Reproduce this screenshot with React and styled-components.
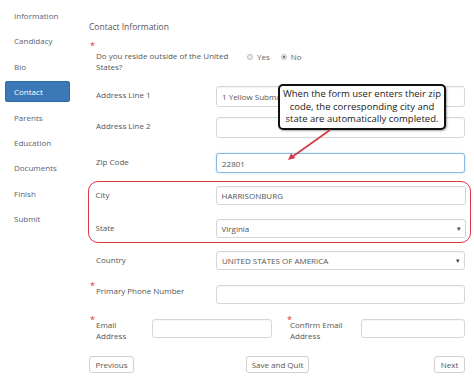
import React from "react";
import styled, { createGlobalStyle } from "styled-components";

const Global = createGlobalStyle`
  html, body { margin: 0; padding: 0; background: #fff; }
  body { font-family: "Open Sans", "Noto Sans", Arial, sans-serif; color: #555; }
  * { box-sizing: border-box; }
`;

const Page = styled.div`
  position: relative;
  width: 474px;
  height: 384px;
  display: flex;
  overflow: hidden;
`;

const Sidebar = styled.nav`
  width: 89px;
  flex: none;
  padding: 5px 0 0 5px;
  display: flex;
  flex-direction: column;
`;

const NavItem = styled.div`
  width: 65px;
  height: 21px;
  margin-bottom: 4.4px;
  padding-left: 8px;
  display: flex;
  align-items: center;
  font-size: 8px;
  border-radius: 2px;
  color: ${(p) => (p.$active ? "#fff" : "#5a6470")};
  background: ${(p) => (p.$active ? "#3a78b8" : "transparent")};
  border: 1px solid ${(p) => (p.$active ? "#2f6aa6" : "transparent")};
`;

const Main = styled.main`
  flex: 1;
  padding: 21px 9px 0 0;
  display: flex;
  flex-direction: column;
`;

const Title = styled.div`
  height: 12px;
  line-height: 12px;
  font-size: 8.5px;
  color: #555;
  margin-bottom: 12px;
`;

const Row = styled.div`
  display: flex;
  align-items: flex-start;
  min-height: ${(p) => p.$h || 20}px;
  margin-bottom: ${(p) => p.$mb || 0}px;
`;

const Star = styled.div`
  width: ${(p) => p.$w || 7}px;
  flex: none;
  color: #d33;
  font-size: 9px;
  line-height: 9px;
  margin-top: -4px;
  padding-left: 1px;
`;

const Label = styled.div`
  width: ${(p) => p.$w || 120}px;
  flex: none;
  font-size: 8px;
  line-height: 11px;
  padding-top: ${(p) => (p.$pt != null ? p.$pt : 2.5)}px;
  color: #555;
`;

const Input = styled.div`
  flex: ${(p) => (p.$w ? "none" : 1)};
  width: ${(p) => (p.$w ? p.$w + "px" : "auto")};
  height: ${(p) => p.$h || 20}px;
  border: 1px solid ${(p) => (p.$focus ? "#8ab8e2" : "#d6d6d6")};
  box-shadow: ${(p) => (p.$focus ? "0 0 2px rgba(102,175,233,0.5)" : "inset 0 1px 1px rgba(0,0,0,0.04)")};
  border-radius: 3px;
  background: #fff;
  display: flex;
  align-items: center;
  justify-content: space-between;
  padding: 0 4px 0 5px;
  font-size: 8px;
  color: #555;
`;

const Caret = styled.span`
  font-size: 7px;
  color: #444;
`;

const Radios = styled.div`
  display: flex;
  align-items: center;
  padding-top: 6px;
  margin-left: 5px;
  font-size: 8px;
  color: #666;
`;

const RadioOpt = styled.label`
  display: flex;
  align-items: center;
  margin-right: 11px;
  gap: 4px;
`;

const Dot = styled.span`
  width: 6px;
  height: 6px;
  border-radius: 50%;
  border: 1px solid #bbb;
  background: #eee;
  display: inline-flex;
  align-items: center;
  justify-content: center;
  &::after {
    content: "";
    width: 2px;
    height: 2px;
    border-radius: 50%;
    background: ${(p) => (p.$on ? "#444" : "transparent")};
  }
`;

const Group = styled.div`
  border: 1.5px solid #d9363e;
  border-radius: 10px;
  margin: 0 -5.5px 8px -1.5px;
  padding: 4px 4px 3px 0;
`;

const Spacer = styled.div`
  width: ${(p) => p.$w}px;
  flex: none;
`;

const Buttons = styled.div`
  display: flex;
  align-items: center;
  margin-top: -1px;
`;

const Btn = styled.button`
  height: 17px;
  width: ${(p) => p.$w}px;
  margin-left: ${(p) => p.$ml || "0"};
  padding: 0;
  border: 1px solid #d0d0d0;
  border-radius: 3px;
  background: #fff;
  font-family: inherit;
  font-size: 8px;
  color: #555;
`;

const Callout = styled.div`
  position: absolute;
  left: 278px;
  top: 84px;
  width: 168px;
  height: 46px;
  border: 2px solid #111;
  border-radius: 5px;
  background: #fff;
  box-shadow: 1px 1px 2px rgba(0, 0, 0, 0.35);
  display: flex;
  flex-direction: column;
  align-items: center;
  justify-content: center;
  text-align: center;
  white-space: nowrap;
  font-family: "Open Sans", sans-serif;
  font-size: 9.5px;
  font-weight: 400;
  line-height: 12.5px;
  color: #1a1a1a;
`;

const Arrow = styled.svg`
  position: absolute;
  left: 280px;
  top: 126px;
  overflow: visible;
`;

const navItems = ["Information", "Candidacy", "Bio", "Contact", "Parents", "Education", "Documents", "Finish", "Submit"];

export default function App() {
  return (
    <>
      <Global />
      <Page>
        <Sidebar>
          {navItems.map((n) => (
            <NavItem key={n} $active={n === "Contact"}>{n}</NavItem>
          ))}
        </Sidebar>
        <Main>
          <Title>Contact Information</Title>
          <Row $h={27} $mb={14}>
            <Star>*</Star>
            <Label $w={146} $pt={4.5}>Do you reside outside of the United States?</Label>
            <Radios>
              <RadioOpt><Dot />Yes</RadioOpt>
              <RadioOpt><Dot $on />No</RadioOpt>
            </Radios>
          </Row>
          <Row $mb={10}>
            <Star />
            <Label>Address Line 1</Label>
            <Input $h={21}>1 Yellow Submarine</Input>
          </Row>
          <Row $mb={15}>
            <Star />
            <Label>Address Line 2</Label>
            <Input $h={21} />
          </Row>
          <Row $mb={8}>
            <Star />
            <Label>Zip Code</Label>
            <Input $focus>22801</Input>
          </Row>
          <Group>
            <Row $mb={13}>
              <Star />
              <Label>City</Label>
              <Input $h={19}>HARRISONBURG</Input>
            </Row>
            <Row>
              <Star />
              <Label>State</Label>
              <Input $h={19}>Virginia<Caret>▾</Caret></Input>
            </Row>
          </Group>
          <Row $mb={14}>
            <Star />
            <Label>Country</Label>
            <Input $h={19}>UNITED STATES OF AMERICA<Caret>▾</Caret></Input>
          </Row>
          <Row $mb={14}>
            <Star>*</Star>
            <Label $pt={0}>Primary Phone Number</Label>
            <Input $h={19} />
          </Row>
          <Row $h={22} $mb={16}>
            <Star>*</Star>
            <Label $w={56} $pt={-1}>Email<br />Address</Label>
            <Input $h={19} $w={120} />
            <Spacer $w={14} />
            <Star $w={4}>*</Star>
            <Label $w={71} $pt={0}>Confirm Email<br />Address</Label>
            <Input $h={19} />
          </Row>
          <Buttons>
            <Btn $w={45}>Previous</Btn>
            <Btn $w={63} $ml="112px">Save and Quit</Btn>
            <Btn $w={31} $ml="auto">Next</Btn>
          </Buttons>
        </Main>
        <Callout>
          <span>When the form user enters their zip</span>
          <span>code, the corresponding city and</span>
          <span>state are automatically completed.</span>
        </Callout>
        <Arrow width="60" height="40" viewBox="0 0 60 40">
          <line x1="50" y1="4" x2="12" y2="31" stroke="#d43a43" strokeWidth="1.6" />
          <polygon points="8,34 11,27.5 15.5,32" fill="#d43a43" />
        </Arrow>
      </Page>
    </>
  );
}
